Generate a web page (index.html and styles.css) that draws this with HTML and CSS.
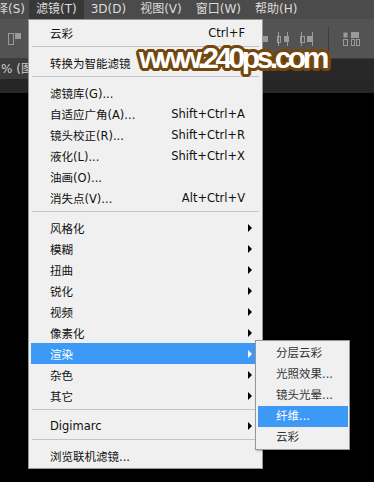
FILE: index.html
```html
<!DOCTYPE html>
<html>
<head>
    <meta charset="UTF-8">
    <link rel="stylesheet" href="styles.css">
</head>
<body>
    <div class="menubar">
        <span class="menubar-item first">择(S)</span>
        <span class="menubar-item active">滤镜(T)</span>
        <span class="menubar-item">3D(D)</span>
        <span class="menubar-item">视图(V)</span>
        <span class="menubar-item">窗口(W)</span>
        <span class="menubar-item">帮助(H)</span>
    </div>

    <div class="toolbar">
        <svg class="tool-icon" viewBox="0 0 14 14">
            <rect x="0.5" y="1.5" width="5" height="11" fill="none" stroke="#9a9a9a"/>
            <rect x="7" y="1" width="6" height="6" fill="#9a9a9a"/>
        </svg>
        <div class="tool-group">
            <svg class="tool-icon" viewBox="0 0 8 14">
                <path d="M1.5 0v14" stroke="#9a9a9a"/>
                <rect x="3" y="4" width="5" height="6" fill="#9a9a9a"/>
            </svg>
            <svg class="tool-icon" viewBox="0 0 14 14">
                <path d="M1.5 0v14M10.5 0v14" stroke="#9a9a9a"/>
                <rect x="0.5" y="4.5" width="3" height="6" fill="none" stroke="#9a9a9a"/>
                <rect x="7" y="4" width="5" height="6" fill="#9a9a9a"/>
            </svg>
            <svg class="tool-icon" viewBox="0 0 14 14">
                <path d="M1.5 0v14M12.5 0v14" stroke="#9a9a9a"/>
                <rect x="0.5" y="4.5" width="4" height="6" fill="none" stroke="#9a9a9a"/>
                <rect x="7" y="4" width="5" height="6" fill="#9a9a9a"/>
            </svg>
            <span class="tool-divider"></span>
            <svg class="tool-icon wide" viewBox="0 0 17 14">
                <rect x="0.5" y="0.5" width="4" height="5" fill="#9a9a9a"/>
                <rect x="0.5" y="7.5" width="4" height="6" fill="none" stroke="#9a9a9a"/>
                <rect x="8" y="0" width="8" height="6" fill="#9a9a9a"/>
                <rect x="8.5" y="7.5" width="3" height="6" fill="none" stroke="#9a9a9a"/>
                <rect x="13.5" y="7.5" width="3" height="6" fill="none" stroke="#9a9a9a"/>
            </svg>
        </div>
    </div>

    <div class="tabbar">
        <span class="tab">% (图层 1, RGB/8) *</span>
    </div>
    <div class="ruler"></div>
    <div class="canvas"></div>

    <div class="menu">
        <div class="item"><span>云彩</span><span class="shortcut">Ctrl+F</span></div>
        <div class="separator"></div>
        <div class="item"><span>转换为智能滤镜</span></div>
        <div class="separator"></div>
        <div class="item"><span>滤镜库(G)...</span></div>
        <div class="item"><span>自适应广角(A)...</span><span class="shortcut">Shift+Ctrl+A</span></div>
        <div class="item"><span>镜头校正(R)...</span><span class="shortcut">Shift+Ctrl+R</span></div>
        <div class="item"><span>液化(L)...</span><span class="shortcut">Shift+Ctrl+X</span></div>
        <div class="item"><span>油画(O)...</span></div>
        <div class="item"><span>消失点(V)...</span><span class="shortcut">Alt+Ctrl+V</span></div>
        <div class="separator"></div>
        <div class="item"><span>风格化</span><span class="arrow"></span></div>
        <div class="item"><span>模糊</span><span class="arrow"></span></div>
        <div class="item"><span>扭曲</span><span class="arrow"></span></div>
        <div class="item"><span>锐化</span><span class="arrow"></span></div>
        <div class="item"><span>视频</span><span class="arrow"></span></div>
        <div class="item"><span>像素化</span><span class="arrow"></span></div>
        <div class="item selected">
            <span>渲染</span><span class="arrow"></span>
            <div class="submenu">
                <div class="sub-item">分层云彩</div>
                <div class="sub-item">光照效果...</div>
                <div class="sub-item">镜头光晕...</div>
                <div class="sub-item selected">纤维...</div>
                <div class="sub-item">云彩</div>
            </div>
        </div>
        <div class="item"><span>杂色</span><span class="arrow"></span></div>
        <div class="item"><span>其它</span><span class="arrow"></span></div>
        <div class="separator"></div>
        <div class="item"><span>Digimarc</span><span class="arrow"></span></div>
        <div class="separator"></div>
        <div class="item"><span>浏览联机滤镜...</span></div>
    </div>

    <div class="watermark">www.240ps.com</div>
</body>
</html>
```

FILE: styles.css
```css
html, body {
    margin: 0;
    height: 100%;
}

body {
    width: 374px;
    height: 482px;
    overflow: hidden;
    position: relative;
    display: flex;
    flex-direction: column;
    background: #000;
    font-family: "DejaVu Sans", "Noto Sans CJK SC", sans-serif;
    font-size: 11.5px;
}

.menubar {
    height: 19px;
    display: flex;
    align-items: center;
    background: #4b4b4b;
    color: #dcdcdc;
    font-size: 12px;
    white-space: nowrap;
}

.menubar-item {
    height: 19px;
    line-height: 19px;
    padding: 0 7px;
}

.menubar-item.first {
    margin-left: -4px;
    padding-left: 0;
    padding-right: 4px;
}

.menubar-item.active {
    background: #383838;
}

.toolbar {
    height: 39px;
    display: flex;
    align-items: center;
    background: #535353;
    border-bottom: 1px solid #3c3c3c;
    padding: 0 14px 0 8px;
}

.tool-icon {
    width: 14px;
    height: 14px;
}

.tool-group {
    margin-left: auto;
    display: flex;
    align-items: center;
    gap: 9px;
}

.tool-group .tool-icon:first-child {
    width: 8px;
}

.tool-icon.wide {
    width: 17px;
}

.tool-divider {
    width: 1px;
    height: 24px;
    background: #3d3d3d;
    margin: 0 5px;
}

.tabbar {
    height: 20px;
    display: flex;
    background: #282828;
    overflow: hidden;
}

.tab {
    padding: 0 10px 0 1px;
    line-height: 20px;
    background: #3c3c3c;
    color: #cfcfcf;
    white-space: nowrap;
    font-size: 12px;
}

.ruler {
    height: 14px;
    background: #262626;
}

.canvas {
    flex: 1;
    background: #000;
}

/* filter menu */
.menu {
    position: absolute;
    left: 28px;
    top: 19px;
    width: 233px;
    padding: 2px 0;
    background: #f0f0f0;
    border: 1px solid #979797;
    color: #111;
    z-index: 2;
}

.item {
    position: relative;
    height: 21px;
    margin: 0 2px;
    padding: 0 8px 0 19px;
    display: flex;
    align-items: center;
    white-space: nowrap;
}

.shortcut {
    margin-left: auto;
    margin-right: 7px;
}

.arrow {
    margin-left: auto;
    width: 0;
    height: 0;
    border-left: 4px solid #000;
    border-top: 4px solid transparent;
    border-bottom: 4px solid transparent;
}

.item.selected {
    background: #3c99f5;
    color: #fff;
}

.item.selected .arrow {
    border-left-color: #fff;
}

.separator {
    height: 1px;
    margin: 3px 3px 5px;
    background: #c3c3c3;
}

.submenu {
    position: absolute;
    left: 224px;
    top: -3px;
    width: 93px;
    padding: 2px 0 1px;
    background: #f0f0f0;
    border: 1px solid #979797;
    color: #333;
    box-shadow: 1px 1px 2px rgba(0, 0, 0, 0.3);
}

.sub-item {
    height: 21px;
    line-height: 21px;
    margin: 0 1px 0 2px;
    padding-left: 18px;
}

.sub-item.selected {
    background: #3c99f5;
    color: #fff;
}

.watermark {
    position: absolute;
    left: 139px;
    top: 43px;
    z-index: 3;
    font-family: "Liberation Sans", Arial, sans-serif;
    font-weight: bold;
    font-size: 30px;
    line-height: 30px;
    letter-spacing: -3.5px;
    white-space: nowrap;
    color: #fff;
    text-shadow:
        2px 0 0 #74470f, -2px 0 0 #74470f, 0 2px 0 #74470f, 0 -2px 0 #74470f,
        2px 2px 0 #74470f, -2px -2px 0 #74470f, 2px -2px 0 #74470f, -2px 2px 0 #74470f,
        3px 1px 0 #74470f, -3px 1px 0 #74470f, 3px -1px 0 #74470f, -3px -1px 0 #74470f,
        1px 3px 0 #74470f, -1px 3px 0 #74470f, 1px -3px 0 #74470f, -1px -3px 0 #74470f;
}
```
